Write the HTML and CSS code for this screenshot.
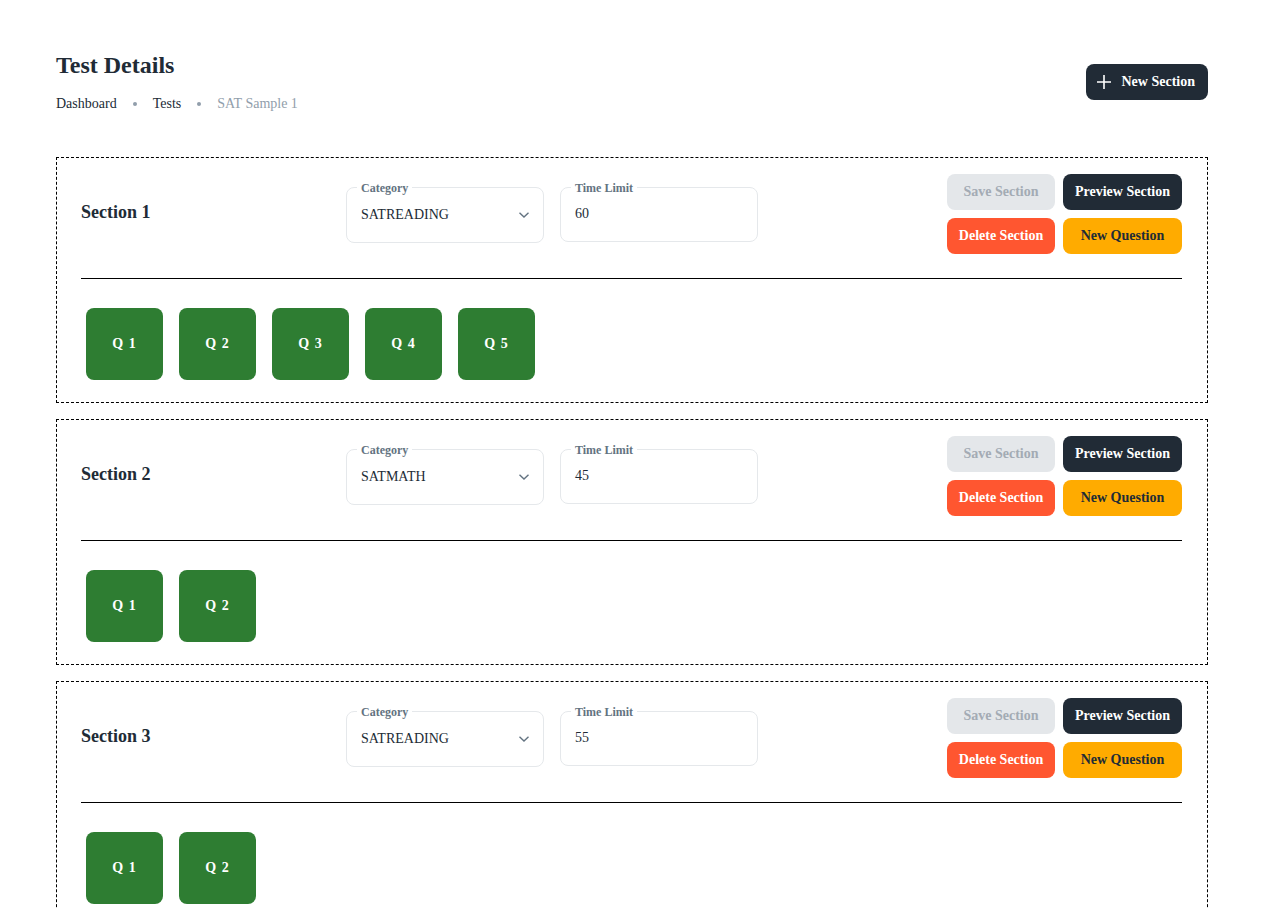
FILE: index.html
```html
<!DOCTYPE html>
<html lang="en">
<head>
<meta charset="utf-8">
<title>Test Details</title>
<link rel="stylesheet" href="styles.css">
</head>
<body>
<div class="page">
  <header class="page-header">
    <div class="heading">
      <h1 class="title">Test Details</h1>
      <nav class="crumbs">
        <span class="crumb">Dashboard</span>
        <span class="dot"></span>
        <span class="crumb">Tests</span>
        <span class="dot"></span>
        <span class="crumb current">SAT Sample 1</span>
      </nav>
    </div>
    <button class="btn btn-dark btn-new">
      <svg class="plus" width="16" height="16" viewBox="0 0 16 16"><path d="M8 1v14M1 8h14" stroke="#fff" stroke-width="1.6" fill="none"/></svg>
      New Section
    </button>
  </header>

  <section class="section">
    <div class="section-head">
      <h2 class="section-title">Section 1</h2>
      <div class="fields">
        <fieldset class="field field-select">
          <legend>Category</legend>
          <span class="value">SATREADING</span>
          <svg class="chev" width="12" height="8" viewBox="0 0 12 8"><path d="M1.5 1.8 6 6 10.5 1.8" stroke="#637381" stroke-width="1.4" fill="none"/></svg>
        </fieldset>
        <fieldset class="field">
          <legend>Time Limit</legend>
          <span class="value">60</span>
        </fieldset>
      </div>
      <div class="actions">
        <button class="btn btn-disabled">Save Section</button>
        <button class="btn btn-dark">Preview Section</button>
        <button class="btn btn-red">Delete Section</button>
        <button class="btn btn-amber">New Question</button>
      </div>
    </div>
    <hr class="rule">
    <div class="questions">
      <button class="q">Q 1</button>
      <button class="q">Q 2</button>
      <button class="q">Q 3</button>
      <button class="q">Q 4</button>
      <button class="q">Q 5</button>
    </div>
  </section>

  <section class="section">
    <div class="section-head">
      <h2 class="section-title">Section 2</h2>
      <div class="fields">
        <fieldset class="field field-select">
          <legend>Category</legend>
          <span class="value">SATMATH</span>
          <svg class="chev" width="12" height="8" viewBox="0 0 12 8"><path d="M1.5 1.8 6 6 10.5 1.8" stroke="#637381" stroke-width="1.4" fill="none"/></svg>
        </fieldset>
        <fieldset class="field">
          <legend>Time Limit</legend>
          <span class="value">45</span>
        </fieldset>
      </div>
      <div class="actions">
        <button class="btn btn-disabled">Save Section</button>
        <button class="btn btn-dark">Preview Section</button>
        <button class="btn btn-red">Delete Section</button>
        <button class="btn btn-amber">New Question</button>
      </div>
    </div>
    <hr class="rule">
    <div class="questions">
      <button class="q">Q 1</button>
      <button class="q">Q 2</button>
    </div>
  </section>

  <section class="section">
    <div class="section-head">
      <h2 class="section-title">Section 3</h2>
      <div class="fields">
        <fieldset class="field field-select">
          <legend>Category</legend>
          <span class="value">SATREADING</span>
          <svg class="chev" width="12" height="8" viewBox="0 0 12 8"><path d="M1.5 1.8 6 6 10.5 1.8" stroke="#637381" stroke-width="1.4" fill="none"/></svg>
        </fieldset>
        <fieldset class="field">
          <legend>Time Limit</legend>
          <span class="value">55</span>
        </fieldset>
      </div>
      <div class="actions">
        <button class="btn btn-disabled">Save Section</button>
        <button class="btn btn-dark">Preview Section</button>
        <button class="btn btn-red">Delete Section</button>
        <button class="btn btn-amber">New Question</button>
      </div>
    </div>
    <hr class="rule">
    <div class="questions">
      <button class="q">Q 1</button>
      <button class="q">Q 2</button>
    </div>
  </section>
</div>
</body>
</html>
```

FILE: styles.css
```css
* { box-sizing: border-box; }
html, body { margin: 0; padding: 0; background: #fff; }
body {
  font-family: "Liberation Serif", "Times New Roman", serif;
  color: #212b36;
  overflow: hidden;
}
.page {
  padding: 47px 54px 40px 56px;
}
.page-header {
  display: flex;
  align-items: center;
  justify-content: space-between;
  margin-bottom: 42px;
}
.title {
  margin: 0 0 10px;
  font-size: 24px;
  line-height: 36px;
  font-weight: 700;
  color: #212b36;
}
.crumbs {
  display: flex;
  align-items: center;
  gap: 16px;
  font-size: 14px;
  line-height: 22px;
}
.crumb { color: #212b36; }
.crumb.current { color: #919eab; }
.dot {
  width: 4px;
  height: 4px;
  border-radius: 50%;
  background: #919eab;
}
.btn {
  font-family: "Liberation Serif", "Times New Roman", serif;
  font-weight: 700;
  font-size: 14px;
  line-height: 24px;
  height: 36px;
  padding: 0 12px;
  border: 0;
  border-radius: 8px;
  cursor: pointer;
  white-space: nowrap;
}
.btn-new {
  display: flex;
  align-items: center;
  gap: 10px;
  padding: 0 13px 0 10px;
  margin-top: 2px;
}
.btn-dark { background: #212b36; color: #fff; }
.btn-disabled { background: #e4e7ea; color: #a3abb4; }
.btn-red { background: #ff5630; color: #fff; }
.btn-amber { background: #ffab00; color: #212b36; }

.section {
  border: 1px dashed #000;
  padding: 16px 25px 22px 24px;
  margin-bottom: 16px;
}
.section-head {
  display: flex;
  align-items: center;
}
.section-title {
  width: 265px;
  margin: 0;
  font-size: 18px;
  line-height: 28px;
  font-weight: 700;
  color: #212b36;
  position: relative;
  top: -2px;
}
.fields {
  display: flex;
  gap: 16px;
  margin-top: -4px;
}
.field {
  width: 198px;
  height: 60px;
  margin: 0;
  padding: 0 14px;
  border: 1px solid #e5e8eb;
  border-radius: 8px;
  display: flex;
  align-items: center;
}
.field-select { height: 61px; }
.field legend {
  font-size: 12px;
  line-height: 12px;
  font-weight: 700;
  color: #637381;
  padding: 0 4px;
  margin-left: -4px;
}
.value {
  flex: 1;
  font-size: 14px;
  line-height: 20px;
  color: #212b36;
  margin-top: -7px;
}
.field-select .value { margin-top: -6px; }
.chev { margin-top: -5px; margin-right: -1px; }
.actions {
  margin-left: auto;
  display: grid;
  grid-template-columns: 108px 119px;
  gap: 8px;
}
.actions .btn { padding: 0; }
.rule {
  border: 0;
  border-top: 1px solid #000;
  margin: 24px 0 0;
}
.questions {
  display: flex;
  gap: 16px;
  padding: 29px 5px 0;
}
.q {
  width: 77px;
  height: 72px;
  border: 0;
  border-radius: 8px;
  background: #2e7d32;
  color: #fff;
  font-family: "Liberation Serif", "Times New Roman", serif;
  font-weight: 700;
  font-size: 14px;
  letter-spacing: 1px;
  cursor: pointer;
}
```
